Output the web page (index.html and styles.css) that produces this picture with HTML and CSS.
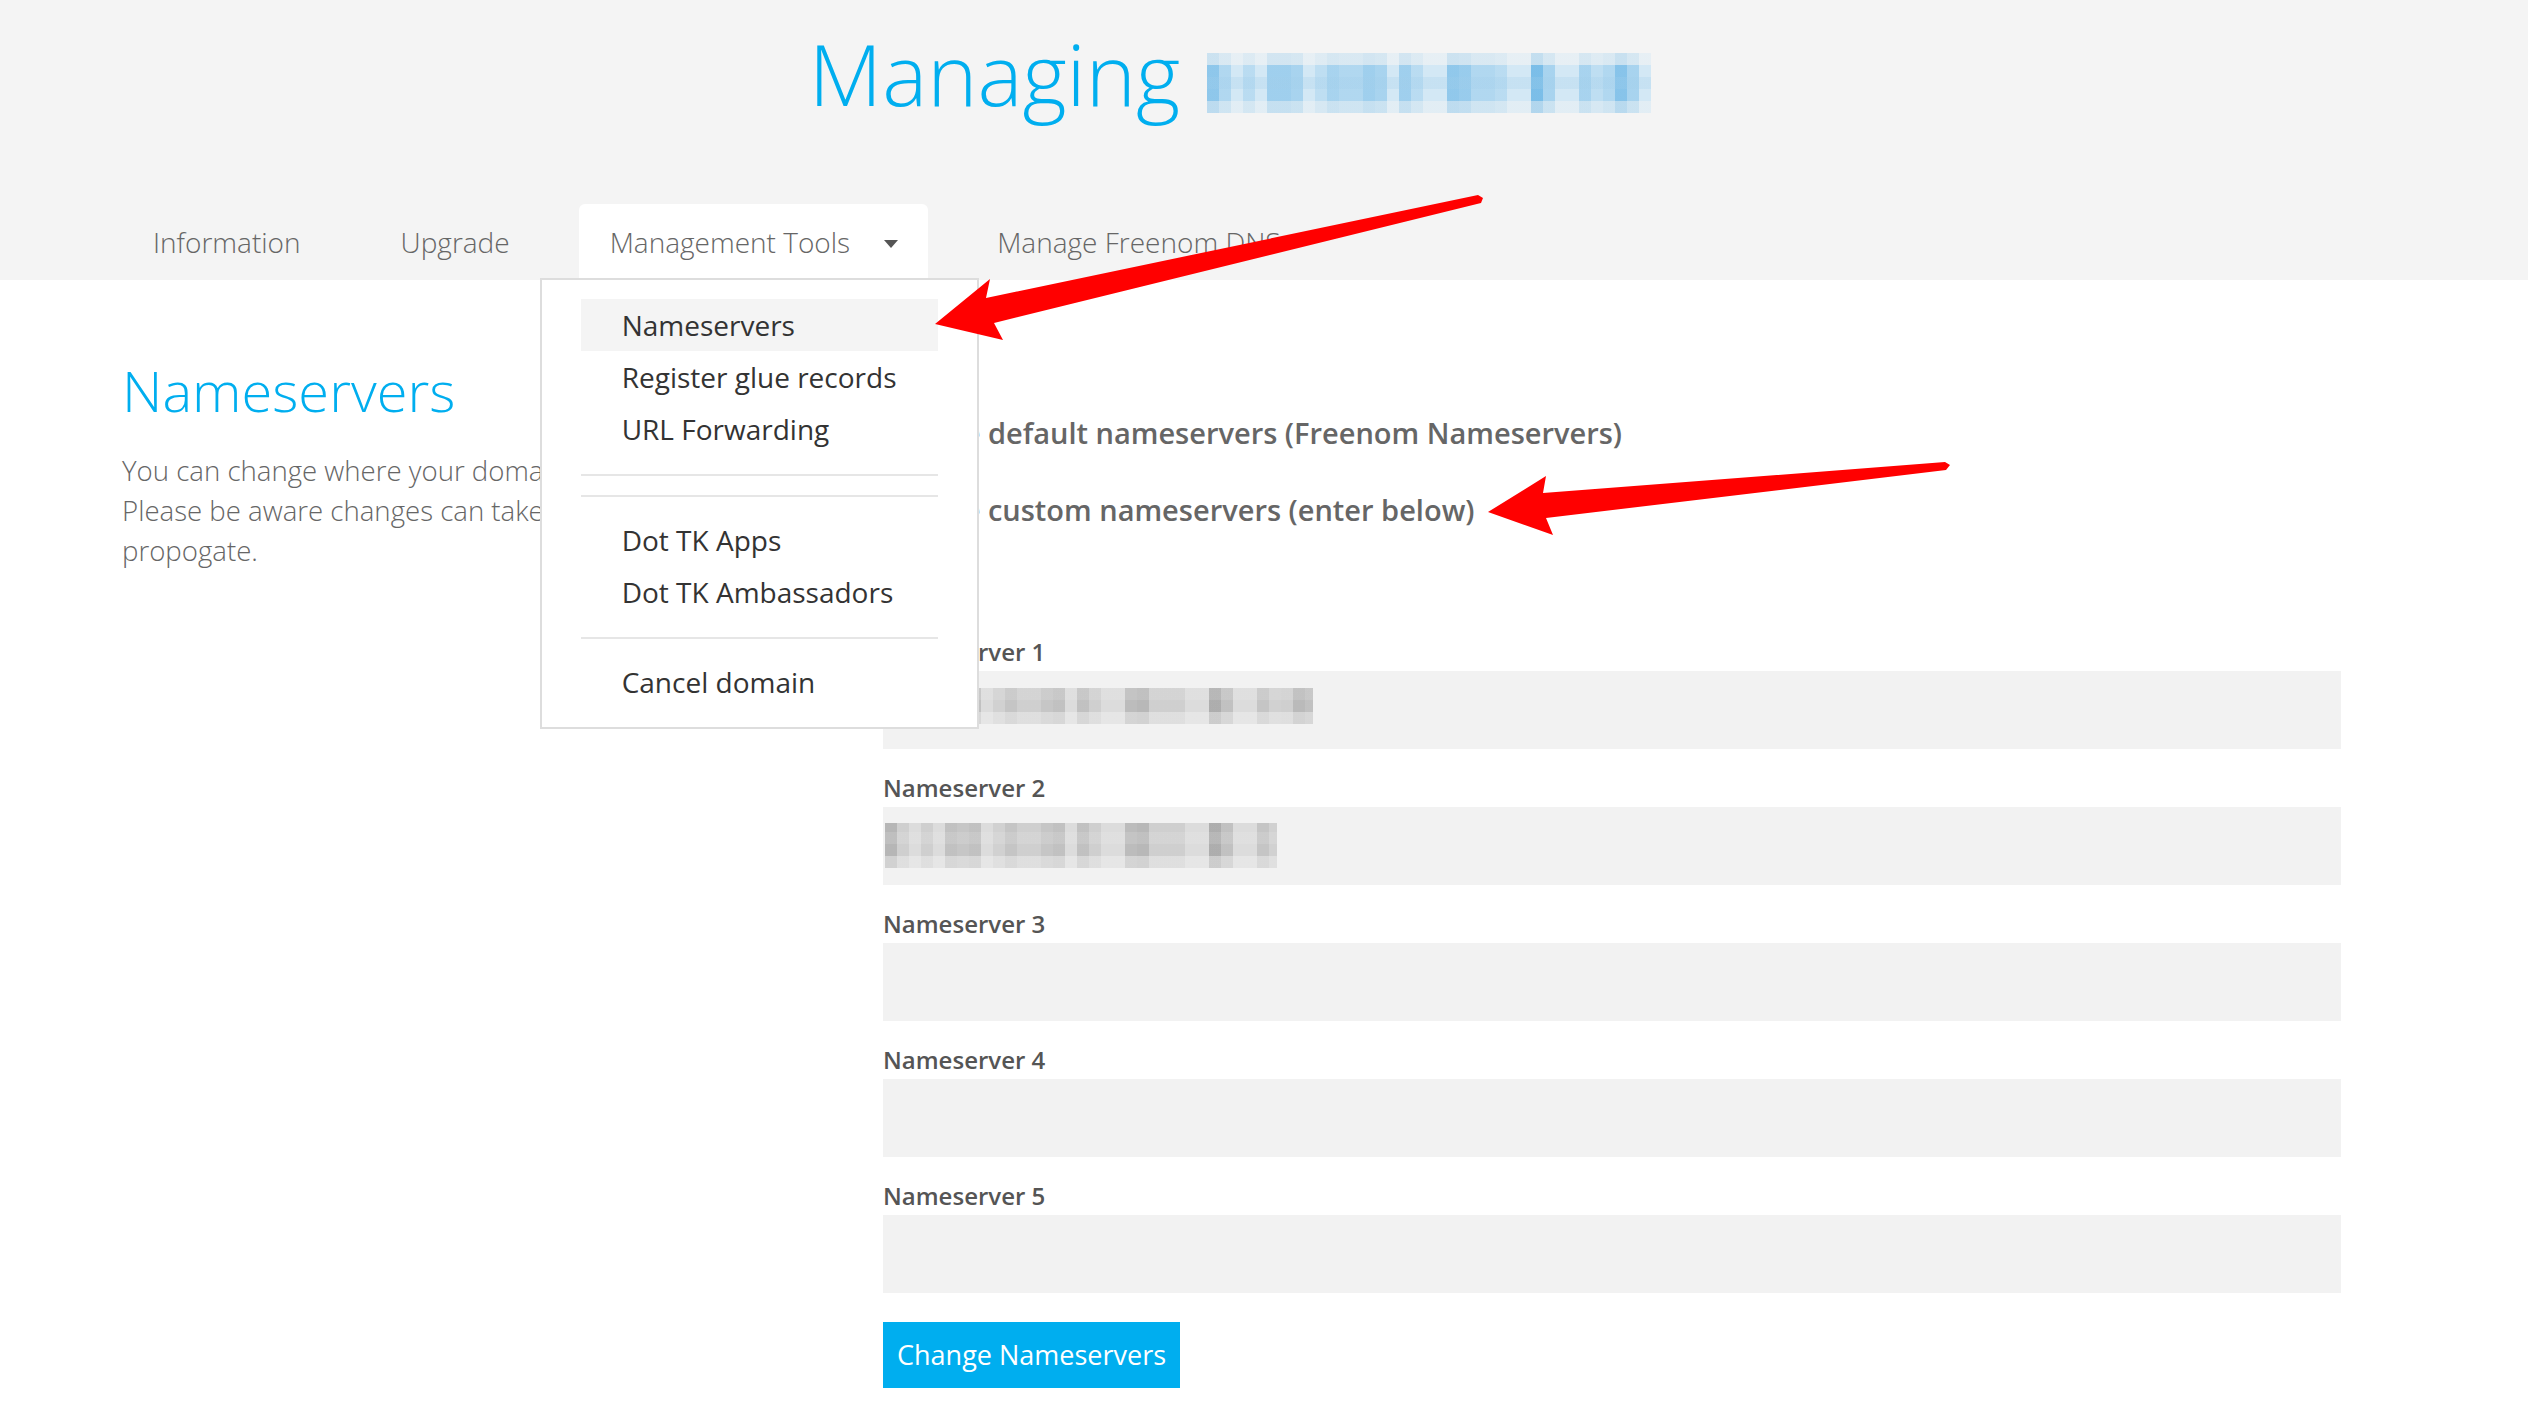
FILE: index.html
```html
<!DOCTYPE html>
<html lang="en">
<head>
<meta charset="utf-8">
<title>Managing domain – Nameservers</title>
<link rel="stylesheet" href="styles.css">
</head>
<body>
<div class="page">
  <header class="top">
    <h1 class="title"><span class="title-text">Managing</span><span class="domain-pix"></span></h1>
    <nav class="tabs">
      <a class="tab">Information</a>
      <a class="tab">Upgrade</a>
      <div class="tab tab-active">Management Tools<span class="caret"></span>
        <ul class="menu">
          <li class="menu-item is-hover">Nameservers</li>
          <li class="menu-item">Register glue records</li>
          <li class="menu-item">URL Forwarding</li>
          <li class="divider"></li>
          <li class="divider"></li>
          <li class="menu-item">Dot TK Apps</li>
          <li class="menu-item">Dot TK Ambassadors</li>
          <li class="divider"></li>
          <li class="menu-item">Cancel domain</li>
        </ul>
      </div>
      <a class="tab">Manage Freenom DNS</a>
    </nav>
  </header>

  <main class="content">
    <section class="intro">
      <h2>Nameservers</h2>
      <p>You can change where your domain points to here.<br>Please be aware changes can take up to 24 hours to propogate.</p>
    </section>

    <form class="ns-form">
      <div class="radio-row"><span class="radio"></span>Use default nameservers (Freenom Nameservers)</div>
      <div class="radio-row"><span class="radio radio-on"></span>Use custom nameservers (enter below)</div>

      <div class="fields">
        <div class="field">
          <label>Nameserver 1</label>
          <div class="input"><span class="pix pix-1"></span></div>
        </div>
        <div class="field">
          <label>Nameserver 2</label>
          <div class="input"><span class="pix pix-2"></span></div>
        </div>
        <div class="field">
          <label>Nameserver 3</label>
          <div class="input"></div>
        </div>
        <div class="field">
          <label>Nameserver 4</label>
          <div class="input"></div>
        </div>
        <div class="field">
          <label>Nameserver 5</label>
          <div class="input"></div>
        </div>
      </div>

      <button type="button" class="btn">Change Nameservers</button>
    </form>
  </main>

  <svg class="annotations" width="2528" height="1422" viewBox="0 0 2528 1422">
    <polygon fill="#ff0000" points="935,324 990,279 986,298 1478,195 1483,198 1481,203 994,323 1003,340"/>
    <polygon fill="#ff0000" points="1488,512 1546,476 1543,493 1945,462 1950,465 1946,470 1546,518 1553,535"/>
  </svg>
</div>
</body>
</html>
```

FILE: styles.css
```css
* { box-sizing: border-box; }

body {
  margin: 0;
  font-family: "Open Sans", "Noto Sans", sans-serif;
  background: #fff;
  color: #666;
}

.page {
  position: relative;
  min-height: 1422px;
  overflow: hidden;
}

/* ---------- header ---------- */
.top {
  background: #f4f4f4;
  height: 280px;
}

.title {
  margin: 0;
  padding: 22px 68px 0 0;
  display: flex;
  justify-content: center;
  align-items: flex-start;
  font-size: 85px;
  font-weight: 300;
  line-height: 102px;
  color: #00aeef;
}

.domain-pix {
  display: block;
  width: 444px;
  height: 60px;
  margin: 31px 0 0 27px;
  background:
    repeating-linear-gradient(0deg, rgba(244,244,244,.45) 0 12px, transparent 12px 24px, rgba(244,244,244,.15) 24px 36px, transparent 36px 48px, rgba(244,244,244,.6) 48px 60px),
    repeating-linear-gradient(90deg, rgba(40,150,220,.25) 0 12px, transparent 12px 36px, rgba(40,150,220,.15) 36px 48px, transparent 48px 72px, rgba(40,150,220,.3) 72px 84px),
    repeating-linear-gradient(90deg, rgba(40,150,220,.2) 0 24px, transparent 24px 60px, rgba(40,150,220,.3) 60px 72px, transparent 72px 108px, rgba(40,150,220,.12) 108px 132px),
    repeating-linear-gradient(0deg, transparent 0 24px, rgba(40,150,220,.12) 24px 36px, transparent 36px 60px),
    #d3e8f5;
}

.tabs {
  display: flex;
  gap: 38px;
  padding: 0 122px;
  margin-top: 80px;
}

.tab {
  display: block;
  padding: 20px 31px;
  font-size: 28px;
  font-weight: 300;
  line-height: 36px;
  color: #666;
  white-space: nowrap;
}

.tab-active {
  position: relative;
  display: flex;
  align-items: center;
  background: #fff;
  border-radius: 6px 6px 0 0;
  padding-right: 30px;
}

.caret {
  width: 0;
  height: 0;
  margin-left: 34px;
  margin-top: 3px;
  border-left: 7.5px solid transparent;
  border-right: 7.5px solid transparent;
  border-top: 8px solid #555;
}

/* ---------- dropdown ---------- */
.menu {
  position: absolute;
  left: -39px;
  top: 74px;
  width: 439px;
  margin: 0;
  padding: 19px 39px;
  list-style: none;
  background: #fff;
  border: 2px solid #ddd;
  z-index: 5;
}

.menu-item {
  padding-left: 41px;
  font-size: 28px;
  font-weight: 400;
  line-height: 52px;
  color: #333;
  white-space: nowrap;
}

.is-hover { background: #f4f4f4; }

.divider {
  height: 2px;
  background: #e6e6e6;
  margin: 19px 0 17px;
}

/* ---------- content ---------- */
.content {
  display: grid;
  grid-template-columns: 761px 1fr;
  padding: 0 122px;
}

.intro h2 {
  margin: 77px 0 0;
  font-size: 56px;
  font-weight: 300;
  line-height: 67px;
  color: #00aeef;
}

.intro p {
  margin: 26px 0 0;
  max-width: 720px;
  font-size: 27.6px;
  font-weight: 300;
  line-height: 40px;
  color: #666;
}

.ns-form {
  padding: 131px 65px 0 0;
}

.radio-row {
  display: flex;
  align-items: center;
  font-size: 29px;
  font-weight: 600;
  line-height: 44px;
  color: #666;
  white-space: nowrap;
}

.radio-row + .radio-row { margin-top: 33px; }

.radio {
  width: 24px;
  height: 24px;
  margin-right: 21px;
  border: 2px solid #bbb;
  border-radius: 50%;
  background: #fff;
}

.radio-on { box-shadow: inset 0 0 0 5px #fff; background: #00aeef; }

.fields { margin-top: 103px; }

.field { margin-bottom: 22px; }

.field label {
  display: block;
  margin-bottom: 3px;
  font-size: 24px;
  font-weight: 600;
  line-height: 33px;
  color: #555;
}

.input {
  position: relative;
  height: 78px;
  background: #f2f2f2;
}

.pix {
  position: absolute;
  display: block;
  background:
    repeating-linear-gradient(0deg, rgba(242,242,242,.45) 0 12px, transparent 12px 24px, rgba(242,242,242,.15) 24px 36px, transparent 36px 48px),
    repeating-linear-gradient(90deg, rgba(0,0,0,.12) 0 12px, transparent 12px 36px, rgba(0,0,0,.06) 36px 48px, transparent 48px 72px, rgba(0,0,0,.1) 72px 84px),
    repeating-linear-gradient(90deg, rgba(0,0,0,.06) 0 24px, transparent 24px 60px, rgba(0,0,0,.12) 60px 72px, transparent 72px 108px, rgba(0,0,0,.05) 108px 132px),
    #dcdcdc;
}

.pix-1 { left: 2px; top: 17px; width: 428px; height: 36px; }
.pix-2 { left: 2px; top: 16px; width: 392px; height: 45px; }

.btn {
  display: block;
  margin-top: 29px;
  height: 66px;
  padding: 0 14px;
  border: 0;
  background: #00aeef;
  color: #fff;
  font-family: inherit;
  font-size: 27px;
  font-weight: 400;
  line-height: 66px;
}

/* ---------- annotation arrows ---------- */
.annotations {
  position: absolute;
  left: 0;
  top: 0;
  z-index: 10;
  pointer-events: none;
}
```
